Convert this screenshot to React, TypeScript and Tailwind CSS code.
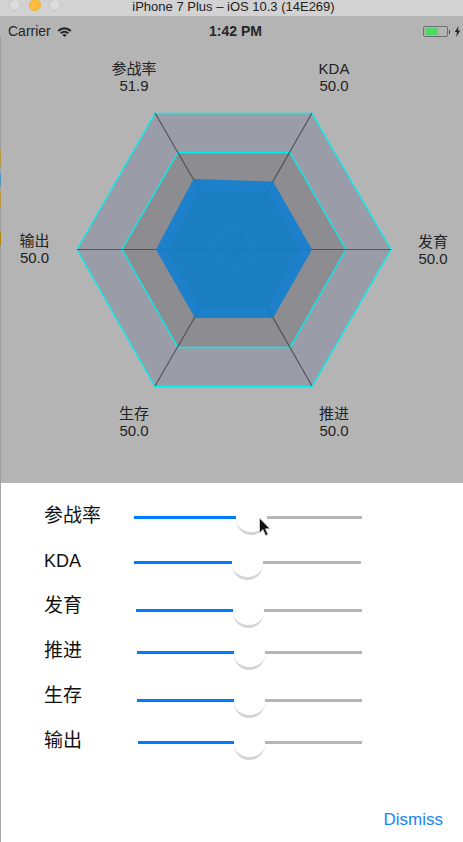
import React from 'react';

const FONT = "font-['Liberation_Sans','Noto_Sans_CJK_SC',sans-serif]";

// Radar chart values, in page coordinates
const OUTER = '155,113.5 312,113.5 391,249.5 312,386.5 155,386.5 77,249.5';
const MIDDLE = '178,152.5 290,152.5 346,249.5 290,347.5 178,347.5 122,249.5';
const VALUE = '193.5,179 273,181.5 312,249.5 273,318 195,318 156,249.5';
const INNER = '200,192 267,192 300,249.5 267,307 200,307 167,249.5';
const SMALL = '223,229 245,229 256,249.5 245,270 223,270 212,249.5';

const SPOKES = [
    [155, 113], [312, 113], [391, 249.5], [312, 386], [155, 386], [77, 249.5]
];

const CHART_LABELS = [
    { x: 134, y: 74, name: '参战率', value: '51.9' },
    { x: 334, y: 74, name: 'KDA', value: '50.0' },
    { x: 433, y: 247, name: '发育', value: '50.0' },
    { x: 334, y: 419, name: '推进', value: '50.0' },
    { x: 134, y: 419, name: '生存', value: '50.0' },
    { x: 34.5, y: 246, name: '输出', value: '50.0' }
];

const SLIDERS = [
    { label: '参战率', size: 'text-[19px]', offset: 'mt-[1px] ml-0', blue: 'w-[102px]', grey: 'w-[95px]' },
    { label: 'KDA', size: 'text-[18px]', offset: 'mt-[1px] ml-0', blue: 'w-[98px]', grey: 'w-[98px]' },
    { label: '发育', size: 'text-[19px]', offset: 'mt-[7px] ml-[2px]', blue: 'w-[97px]', grey: 'w-[98px]' },
    { label: '推进', size: 'text-[19px]', offset: 'mt-[1px] ml-[3px]', blue: 'w-[97px]', grey: 'w-[97px]' },
    { label: '生存', size: 'text-[19px]', offset: 'mt-[7px] ml-[3px]', blue: 'w-[97px]', grey: 'w-[97px]' },
    { label: '输出', size: 'text-[19px]', offset: 'mt-[1px] ml-[4px]', blue: 'w-[96px]', grey: 'w-[97px]' }
];

const TitleBar = () => (
    <div className="h-[16px] shrink-0 bg-[#d2d2d2] grid grid-cols-[1fr_auto_1fr] overflow-hidden">
        <div className="flex gap-[8px] pl-[9px] -mt-[1px]">
            <div className="w-[12px] h-[12px] rounded-full bg-[#dcdcdc] border border-[#c6c6c6]" />
            <div className="w-[12px] h-[12px] rounded-full bg-[#fdbc40] border border-[#eeb13a]" />
            <div className="w-[12px] h-[12px] rounded-full bg-[#dcdcdc] border border-[#c6c6c6]" />
        </div>
        <div className="pl-[4px] text-[13px] leading-[14px] text-[#222222] whitespace-nowrap">iPhone 7 Plus – iOS 10.3 (14E269)</div>
        <div />
    </div>
);

const StatusBar = () => (
    <div className="h-[20px] shrink-0 grid grid-cols-[1fr_auto_1fr] items-center pl-[8px] pt-[5px] text-[14px] text-[#262626]">
        <div className="flex items-center gap-[6px]">
            <span>Carrier</span>
            <svg width="15" height="10" viewBox="0 0 15 10">
                <path d="M0.5 3.2 A10 10 0 0 1 14.5 3.2 L13 4.8 A8 8 0 0 0 2 4.8 Z" fill="#262626" />
                <path d="M3 5.6 A6.4 6.4 0 0 1 12 5.6 L10.5 7.1 A4.4 4.4 0 0 0 4.5 7.1 Z" fill="#262626" />
                <path d="M5.4 8 A3 3 0 0 1 9.6 8 L7.5 10 Z" fill="#262626" />
            </svg>
        </div>
        <span className="font-bold">1:42 PM</span>
        <div className="flex items-center justify-end gap-[1px]">
            <div className="w-[25px] h-[11px] border border-[#6e6e6e] rounded-[2px] p-[1px] flex">
                <div className="w-[13px] bg-[#4cd964]" />
            </div>
            <div className="w-[1px] h-[4px] bg-[#444]" />
            <svg width="7" height="11" viewBox="0 0 7 11" className="ml-[3px] mr-[2px]">
                <path d="M4.5 0 L0.8 6 H3 L2.2 11 L6.2 4.6 H3.9 Z" fill="#222" />
            </svg>
        </div>
    </div>
);

const Radar = () => (
    <svg viewBox="0 36 463 447" className="block w-[463px] h-[447px] shrink-0">
        {/* edge of the window behind */}
        <rect x="0" y="36" width="1" height="447" fill="#a0a0a0" />
        <rect x="0" y="150" width="1" height="16" fill="#b8963c" />
        <rect x="0" y="174" width="1" height="12" fill="#4c94bc" />
        <rect x="0" y="192" width="1" height="15" fill="#b8963c" />
        <rect x="0" y="232" width="1" height="14" fill="#b08a10" />

        <polygon points={OUTER} fill="#9a9ca8" stroke="#00f0f0" strokeWidth="1.3" />
        <polygon points={MIDDLE} fill="#8d8c90" stroke="#00f0f0" strokeWidth="1.3" />
        {SPOKES.map(([x, y]) => (
            <line key={x + '-' + y} x1="234" y1="249.5" x2={x} y2={y} stroke="#444444" strokeOpacity="0.8" strokeWidth="1.2" />
        ))}
        <polygon points={VALUE} fill="#0c80d2" fillOpacity="0.88" />
        <polygon points={INNER} fill="#1b79b4" fillOpacity="0.45" />
        <polygon points={SMALL} fill="none" stroke="#1f86cc" strokeOpacity="0.7" strokeWidth="1" />
        {CHART_LABELS.map((l) => (
            <text key={l.name} x={l.x} textAnchor="middle" fontSize="15" fill="#222222">
                <tspan x={l.x} y={l.y}>{l.name}</tspan>
                <tspan x={l.x} y={l.y + 17}>{l.value}</tspan>
            </text>
        ))}
    </svg>
);

const Slider: React.FC<{ offset: string; blue: string; grey: string }> = ({ offset, blue, grey }) => (
    <div className={`flex items-center h-[3px] ${offset}`}>
        <div className={`h-[3px] bg-[#007aff] ${blue}`} />
        <div className="w-[31px] h-[33px] shrink-0 mt-[2px] rounded-full border-b-[3px] border-[#d4d4d4]" />
        <div className={`h-[3px] bg-[#b6b6b6] ${grey}`} />
    </div>
);

export default function App() {
    return (
        <div className={`relative w-[463px] h-[842px] flex flex-col overflow-hidden bg-white ${FONT}`}>
            <TitleBar />
            <div className="h-[467px] shrink-0 bg-[#b4b4b4] flex flex-col">
                <StatusBar />
                <Radar />
            </div>
            <div className="flex-1 flex flex-col border-l border-[#a6a6a6] pt-[11px]">
                {SLIDERS.map((s) => (
                    <div key={s.label} className={`h-[45px] shrink-0 flex items-center pl-[43px] text-[#111111] ${s.size}`}>
                        <span className="w-[90px] shrink-0">{s.label}</span>
                        <Slider offset={s.offset} blue={s.blue} grey={s.grey} />
                    </div>
                ))}
                <div className="mt-auto pb-[12px] pr-[20px] text-right text-[17px] leading-[20px] text-[#1a84f5]">Dismiss</div>
            </div>
            {/* mouse pointer from the recording */}
            <svg width="14" height="22" viewBox="0 0 14 22" className="absolute left-[258px] top-[517px]">
                <path d="M1.5 1 V16 L5 12.6 L7.6 18.6 L10 17.6 L7.5 11.8 H12 Z" fill="#111" stroke="#d8d8d8" strokeWidth="0.8" />
            </svg>
        </div>
    );
}
